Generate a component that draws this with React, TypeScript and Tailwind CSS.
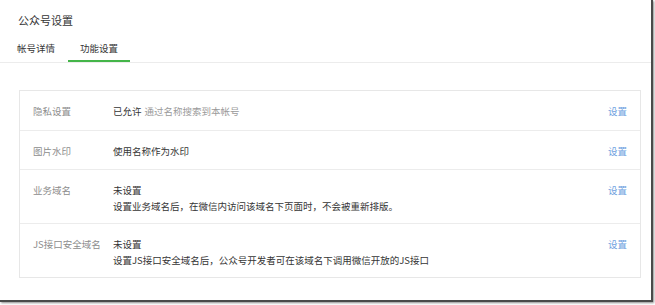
const rows = [
  { label: "隐私设置", value: "已允许", hint: "通过名称搜索到本帐号" },
  { label: "图片水印", value: "使用名称作为水印" },
  { label: "业务域名", value: "未设置", desc: "设置业务域名后，在微信内访问该域名下页面时，不会被重新排版。" },
  { label: "JS接口安全域名", value: "未设置", desc: "设置JS接口安全域名后，公众号开发者可在该域名下调用微信开放的JS接口" },
];

export default function App() {
  return (
    <div
      className="w-[655px] h-[305px] bg-white overflow-hidden"
      style={{ fontFamily: '"Microsoft YaHei", "Noto Sans CJK SC", sans-serif' }}
    >
      <div className="w-[653px] h-[302px] bg-white border-r-2 border-b-2 border-[#4a4a4a] shadow-[1px_1px_2px_rgba(0,0,0,0.45)]">
        <div className="pl-[18px] pt-[12px] text-[11px] leading-[16px] text-[#353535]">公众号设置</div>
        <div className="mt-[13px] flex items-end border-b border-[#ececec] text-[9.5px] text-[#353535]">
          <div className="ml-[17px] w-[51px] leading-[14px] pb-[7px]">帐号详情</div>
          <div className="w-[62px] pl-[12px] leading-[14px] pb-[5px] border-b-2 border-[#44b549]">功能设置</div>
        </div>
        <div className="mt-[27px] ml-[19px] w-[622px] border border-[#e7e7e7]">
          {rows.map((r, i) => (
            <div
              key={r.label}
              className={`flex items-start pl-[13px] pr-[13px] pt-[12px] text-[9.5px] leading-[16px] ${
                i > 0 ? "border-t border-[#ececec]" : ""
              } ${r.desc ? "pb-[9px]" : i === 0 ? "pb-[11px]" : "pb-[10px]"}`}
            >
              <div className="w-[80px] text-[#8d8d8d]">{r.label}</div>
              <div className="flex-1 text-[#353535]">
                <div>
                  {r.value}
                  {r.hint && <span className="ml-[3px] text-[#9a9a9a]">{r.hint}</span>}
                </div>
                {r.desc && <div>{r.desc}</div>}
              </div>
              <div className="text-[#6e9fe0]">设置</div>
            </div>
          ))}
        </div>
      </div>
    </div>
  );
}
